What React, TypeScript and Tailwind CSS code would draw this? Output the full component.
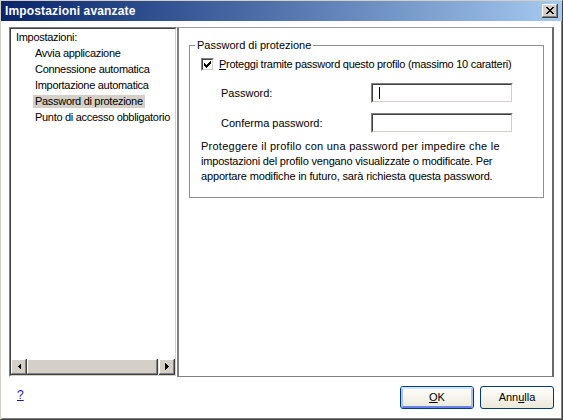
import React from "react";

const sunken =
  "border-t border-l border-t-[#808080] border-l-[#808080] border-b border-r border-b-white border-r-white";
const sunkenInner =
  "border-t border-l border-t-[#404040] border-l-[#404040] border-b border-r border-b-[#d4d0c8] border-r-[#d4d0c8]";

function Sunken({ className = "", innerClass = "", children }: { className?: string; innerClass?: string; children?: React.ReactNode }) {
  return (
    <div className={`${sunken} ${className}`}>
      <div className={`${sunkenInner} h-full w-full ${innerClass}`}>{children}</div>
    </div>
  );
}

function ScrollButton({ dir }: { dir: "left" | "right" }) {
  return (
    <div className="w-[16px] h-[16px] shrink-0 border-r border-b border-r-[#404040] border-b-[#404040] bg-[#d4d0c8]">
      <div className="w-full h-full border-t border-l border-t-white border-l-white border-r border-b border-r-[#808080] border-b-[#808080] flex items-center justify-center">
        <svg width="4" height="7" viewBox="0 0 4 7" shapeRendering="crispEdges">
          {dir === "left" ? (
            <polygon points="4,0 4,7 0.5,3.5" fill="#000" />
          ) : (
            <polygon points="0,0 0,7 3.5,3.5" fill="#000" />
          )}
        </svg>
      </div>
    </div>
  );
}

function Input({ caret = false }: { caret?: boolean }) {
  return (
    <Sunken className="w-[142px] h-[20px]" innerClass="bg-white flex items-center">
      {caret && <div className="ml-[6px] w-px h-[12px] bg-black" />}
    </Sunken>
  );
}

export default function App() {
  const items = [
    "Avvia applicazione",
    "Connessione automatica",
    "Importazione automatica",
    "Password di protezione",
    "Punto di accesso obbligatorio",
  ];
  return (
    <div className="w-[563px] h-[420px] bg-white overflow-hidden font-['Liberation_Sans',Arial,sans-serif] text-[11px] text-black border-t border-l border-t-[#d4d0c8] border-l-[#d4d0c8] border-r border-b border-r-[#404040] border-b-[#404040] flex flex-col">
      {/* Title bar */}
      <div className="h-[20px] shrink-0 bg-gradient-to-r from-[#0a246a] to-[#a6caf0] flex items-center justify-between pl-[4px] pr-[4px]">
        <span className="text-white font-bold text-[12px] tracking-[0.15px] leading-[20px]">Impostazioni avanzate</span>
        <div className="w-[16px] h-[14px] bg-[#d4d0c8] border-r border-b border-r-[#404040] border-b-[#404040]">
          <div className="w-full h-full border-t border-l border-t-white border-l-white border-r border-b border-r-[#808080] border-b-[#808080] flex items-center justify-center">
            <svg width="8" height="7" viewBox="0 0 8 7" shapeRendering="crispEdges">
              <path d="M0 0h2v1h-2zM6 0h2v1h-2zM1 1h2v1h-2zM5 1h2v1h-2zM2 2h4v1h-4zM3 3h2v1h-2zM2 4h4v1h-4zM1 5h2v1h-2zM5 5h2v1h-2zM0 6h2v1h-2zM6 6h2v1h-2z" fill="#000" />
            </svg>
          </div>
        </div>
      </div>

      {/* Body */}
      <div className="flex-1 flex flex-col border-l border-l-white border-r border-r-[#808080] border-b border-b-[#808080] px-[7px] pt-[6px]">
        <div className="flex h-[350px]">
          {/* Left list */}
          <Sunken className="w-[168px] h-full" innerClass="bg-white flex flex-col">
            <div className="flex flex-col tracking-[-0.3px]">
              <div className="h-[16px] leading-[16px] pl-[5px]">Impostazioni:</div>
              {items.map((it, i) => (
                <div key={it} className="h-[16px] flex items-center pl-[22px]">
                  <span className={`px-[2px] leading-[13px] whitespace-nowrap ${i === 3 ? "bg-[#d4d0c8]" : ""}`}>{it}</span>
                </div>
              ))}
            </div>
            <div className="mt-auto flex h-[16px]">
              <ScrollButton dir="left" />
              <div className="flex-1 bg-[#e8e6e0] flex">
                <div className="w-[131px] h-full bg-[#d4d0c8] border-r border-b border-r-[#404040] border-b-[#404040]">
                  <div className="w-full h-full border-t border-l border-t-white border-l-white border-r border-b border-r-[#808080] border-b-[#808080]" />
                </div>
              </div>
              <ScrollButton dir="right" />
            </div>
          </Sunken>

          {/* Right panel */}
          <div className="w-[377px] h-full border-l-2 border-l-[#808080] border-t border-t-[#a0a0a0] border-r-2 border-r-[#6a6a6a] border-b border-b-[#808080] pl-[10px] pr-[8px]">
            <fieldset className="mt-[11px] border border-[#8f8f8f] px-0 pb-[12px] h-[159px]">
              <legend className="ml-[5px] px-[2px] leading-[13px]">Password di protezione</legend>
              <div className="pl-[11px]">
                <div className="mt-[6px] h-[13px] flex items-center">
                  <Sunken className="w-[13px] h-[13px] shrink-0" innerClass="bg-white flex items-center justify-center">
                    <svg width="7" height="7" viewBox="0 0 7 7" shapeRendering="crispEdges">
                      <path d="M6 0h1v3h-1zM5 1h1v3h-1zM4 2h1v3h-1zM0 2h1v3h-1zM1 3h1v3h-1zM3 3h1v3h-1zM2 4h1v3h-1z" fill="#000" />
                    </svg>
                  </Sunken>
                  <span className="ml-[5px] whitespace-nowrap tracking-[-0.27px]">
                    <span className="underline">P</span>roteggi tramite password questo profilo (massimo 10 caratteri)
                  </span>
                </div>
                <div className="mt-[12px] flex items-center h-[20px]">
                  <span className="ml-[20px] w-[150px]">Password:</span>
                  <Input caret />
                </div>
                <div className="mt-[10px] flex items-center h-[20px]">
                  <span className="ml-[20px] w-[150px]">Conferma password:</span>
                  <Input />
                </div>
                <div className="mt-[6px] leading-[15px] whitespace-nowrap">
                  <div className="tracking-[0.25px]">Proteggere il profilo con una password per impedire che le</div>
                  <div className="tracking-[-0.18px]">impostazioni del profilo vengano visualizzate o modificate. Per</div>
                  <div className="tracking-[-0.15px]">apportare modifiche in futuro, sarà richiesta questa password.</div>
                </div>
              </div>
            </fieldset>
          </div>
        </div>

        {/* Bottom row */}
        <div className="flex items-start justify-between mt-[9px]">
          <a className="ml-[8px] mt-[2px] text-[12px] leading-[14px] text-[#1a1aa6] underline">?</a>
          <div className="flex gap-[6px]">
            <button className="w-[74px] h-[23px] rounded-[3px] border border-[#003c74] bg-gradient-to-b from-white to-[#ece9d8] p-0">
              <div className="w-full h-full rounded-[2px] border-2 border-[#a9c3ee] border-t-[#cee7ff] border-b-[#6982ee] flex items-center justify-center">
                <span><span className="underline">O</span>K</span>
              </div>
            </button>
            <button className="w-[74px] h-[23px] rounded-[3px] border border-[#003c74] bg-gradient-to-b from-white to-[#ece9d8] flex items-center justify-center">
              <span>Ann<span className="underline">u</span>lla</span>
            </button>
          </div>
        </div>
      </div>
    </div>
  );
}
